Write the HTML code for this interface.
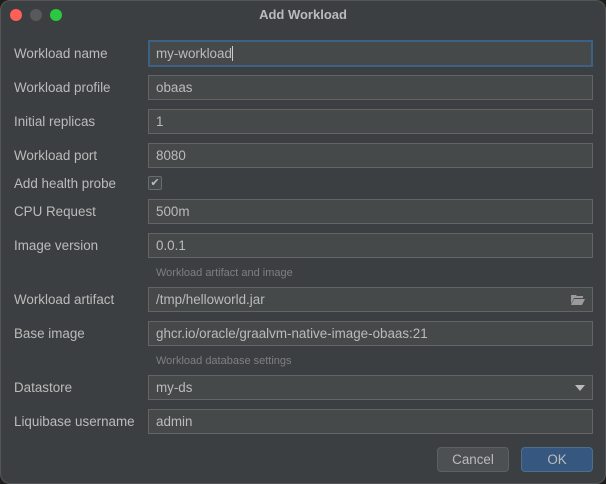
<!DOCTYPE html>
<html><head><style>
*{margin:0;padding:0;box-sizing:border-box}
body{width:606px;height:484px;background:#1e1e1e;font-family:"Liberation Sans",sans-serif;overflow:hidden;position:relative}
.win{position:absolute;left:0;top:0;width:606px;height:484px;background:#3c3f41;border-radius:10px;box-shadow:inset 0 0 0 1px #555}
.title{position:absolute;top:0;left:0;width:606px;height:30px;text-align:center;line-height:30px;color:#bbb;font-weight:bold;font-size:13px}
.dot{position:absolute;top:9px;width:12px;height:12px;border-radius:50%}
.lbl{position:absolute;left:14px;color:#bbb;font-size:13.4px;line-height:16px}
.f{position:absolute;left:148px;width:445px;height:25px;background:#45494a;border:1px solid #646464;color:#bbb;font-size:13.4px;line-height:23px;padding-left:7px}
.sub{position:absolute;left:156px;color:#7f7f7f;font-size:11px;line-height:14px}
.btn{position:absolute;top:447px;height:25px;width:72px;border-radius:4px;font-size:13.4px;color:#bbb;text-align:center;line-height:23px}
</style></head><body>
<div class="win">
<div class="dot" style="left:10px;background:#fe5f57"></div>
<div class="dot" style="left:30px;background:#595959"></div>
<div class="dot" style="left:50px;background:#2bc840"></div>
<div class="title">Add Workload</div>

<div class="lbl" style="top:46px">Workload name</div>
<div class="f" style="top:40px;height:27px;border:2px solid #3d6185;line-height:23px;padding-left:6px">my-workload<span style="display:inline-block;width:1px;height:15px;background:#ccc;vertical-align:-3px"></span></div>
<div class="lbl" style="top:80px">Workload profile</div>
<div class="f" style="top:75px">obaas</div>
<div class="lbl" style="top:114px">Initial replicas</div>
<div class="f" style="top:109px">1</div>
<div class="lbl" style="top:148px">Workload port</div>
<div class="f" style="top:143px">8080</div>
<div class="lbl" style="top:176px">Add health probe</div>
<div style="position:absolute;left:148px;top:176px;width:14px;height:14px;border:1px solid #6b6b6b;background:#43494a;border-radius:2px;color:#bbb;font-size:11px;line-height:12px;text-align:center">✔</div>
<div class="lbl" style="top:204px">CPU Request</div>
<div class="f" style="top:199px">500m</div>
<div class="lbl" style="top:238px">Image version</div>
<div class="f" style="top:233px">0.0.1</div>
<div class="sub" style="top:266px">Workload artifact and image</div>
<div class="lbl" style="top:292px">Workload artifact</div>
<div class="f" style="top:287px">/tmp/helloworld.jar
<svg style="position:absolute;right:7px;top:6px" width="14" height="11" viewBox="0 0 14 11"><path d="M0 1h5l1 1h6v2H3L0 10z" fill="#9a9a9a"/><path d="M3 5h11l-3 6H0z" fill="#9a9a9a"/></svg></div>
<div class="lbl" style="top:326px">Base image</div>
<div class="f" style="top:321px">ghcr.io/oracle/graalvm-native-image-obaas:21</div>
<div class="sub" style="top:354px">Workload database settings</div>
<div class="lbl" style="top:380px">Datastore</div>
<div class="f" style="top:375px">my-ds
<svg style="position:absolute;right:7px;top:9px" width="10" height="6"><path d="M0 0h10L5 6z" fill="#bbb"/></svg></div>
<div class="lbl" style="top:414px">Liquibase username</div>
<div class="f" style="top:409px">admin</div>

<div class="btn" style="left:437px;background:#4c5052;border:1px solid #5e6060">Cancel</div>
<div class="btn" style="left:521px;background:#365880;border:1px solid #4c708c">OK</div>
</div>
</body></html>
